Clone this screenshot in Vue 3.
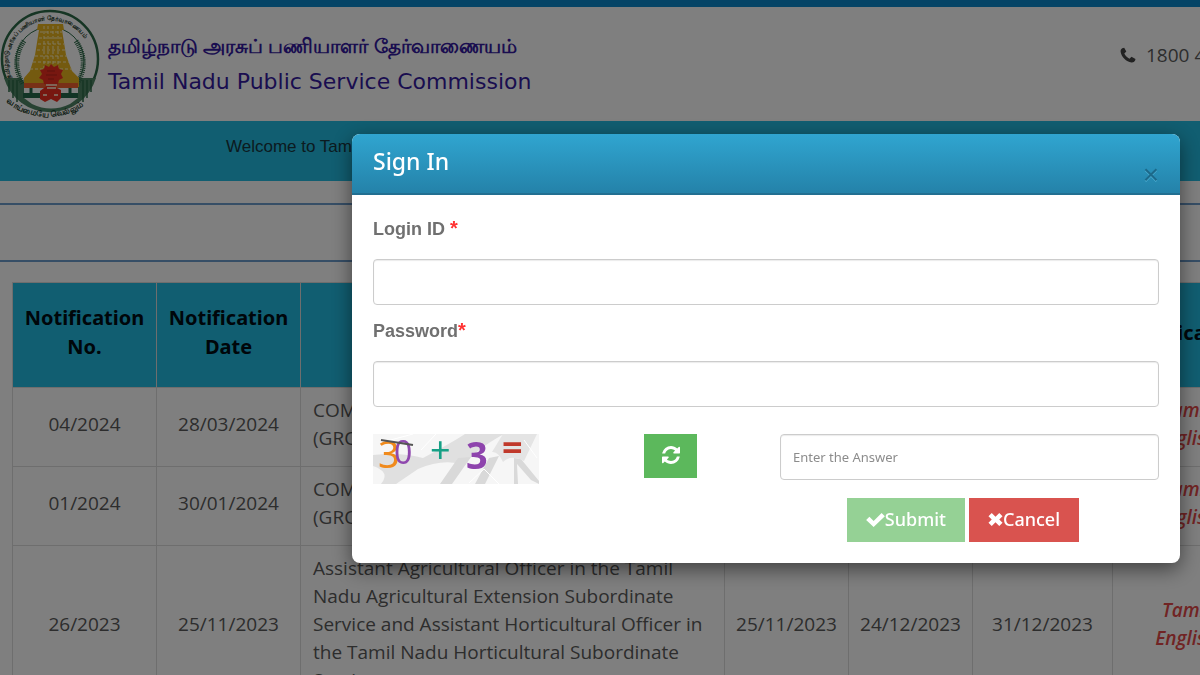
<script setup>
import { ref } from 'vue'

const loginId = ref('')
const password = ref('')
const answer = ref('')

const notifications = [
  {
    no: '04/2024',
    date: '28/03/2024',
    post: 'COMBINED CIVIL SERVICES EXAM - I\n(GROUP I SERVICES)',
    from: '28/03/2024',
    to: '27/04/2024',
    exam: '13/07/2024',
  },
  {
    no: '01/2024',
    date: '30/01/2024',
    post: 'COMBINED CIVIL SERVICES EXAM - IV\n(GROUP IV SERVICES)',
    from: '30/01/2024',
    to: '28/02/2024',
    exam: '09/06/2024',
  },
  {
    no: '26/2023',
    date: '25/11/2023',
    post: 'Assistant Agricultural Officer in the Tamil Nadu Agricultural Extension Subordinate Service and Assistant Horticultural Officer in the Tamil Nadu Horticultural Subordinate Service',
    from: '25/11/2023',
    to: '24/12/2023',
    exam: '31/12/2023',
  },
]
</script>

<template>
  <div class="page">
    <div class="strip"></div>
    <header class="masthead">
      <svg class="emblem" viewBox="0 0 100 112" aria-hidden="true">
        <defs>
          <path id="arc-top" d="M11 70A42 42 0 1 1 89 70" />
          <path id="arc-bottom" d="M6 94Q50 126 96 90" />
        </defs>
        <circle cx="50" cy="51" r="48" fill="#fff" stroke="#2c6a48" stroke-width="2.5" />
        <path d="M4 70H96A48 48 0 0 1 4 70Z" fill="#4f8464" />
        <path d="M9 72V84M13 72V90M17 72V94M83 72V94M87 72V90M91 72V84" stroke="#2c6a48" stroke-width="1.5" />
        <circle cx="50" cy="53" r="34" fill="#fff" stroke="#2c6a48" stroke-width="1" />
        <path d="M24 33Q10 54 23 76M76 33Q90 54 77 76" fill="none" stroke="#2c6a48" stroke-width="5" stroke-dasharray="1 1" />
        <path d="M38 16H63L64 22H62L66 47L72 63L79 70V79H24V70L30 63L35 47L39 22H37Z" fill="#e8b51e" />
        <path
          d="M40 24H62M39 30H63M38 36H64M37 42H65M35 48H67M33 54H69M30 61H72M44 18V60M48 18V56M53 18V56M58 18V60"
          stroke="#fff1ba"
          stroke-width="1"
          stroke-dasharray="3 2"
        />
        <path d="M24 75H78V80H24Z" fill="#f0602e" />
        <path d="M24 80H78V85H24Z" fill="#fff" />
        <path d="M23 85H78V90H23Z" fill="#24694a" />
        <path d="M31 80V85M70 80V85" stroke="#24694a" stroke-width="3" />
        <path d="M24 90H78L70 96Q51 105 32 96Z" fill="#fff" />
        <path
          d="M51 56L54 59L58 57L59 61L63 62L61 66L63 70L59 72L58 76L54 77L57 80L61 82L61 90L57 94L51 91L45 94L40 91L40 83L44 80L48 77L44 76L43 72L39 70L42 66L40 62L44 61L45 57L49 59Z"
          fill="#ef2f20"
        />
        <path d="M46 77H57M47 80H56M43 87H47M54 87H58" stroke="#ffc6ae" stroke-width="2" />
        <path d="M47 63H55M46 67H57M48 71H54" stroke="#b9221a" stroke-width="1" />
        <text class="emblem-text"><textPath href="#arc-top">தமிழ்நாடு அரசுப் பணியாளர் தேர்வாணையம்</textPath></text>
        <text class="emblem-motto"><textPath href="#arc-bottom">வாய்மையே வெல்லும்</textPath></text>
      </svg>
      <div class="names">
        <div class="name-ta" lang="ta">தமிழ்நாடு அரசுப் பணியாளர் தேர்வாணையம்</div>
        <div class="name-en">Tamil Nadu Public Service Commission</div>
      </div>
      <div class="helpline">
        <svg viewBox="0 0 16 16" aria-hidden="true">
          <path
            d="M4.2 .7 2.2 1.2C1 2 .4 3.2.6 4.8 1.2 9.8 6.5 15 11.4 15.5c1.700.2 3-.5 3.700-1.900l.4-1.700-4-2.200-2 2C7.500 11 5 8.500 4.300 6.600l2-2Z"
          />
        </svg>
        <span>1800 419 0958</span>
      </div>
    </header>
    <div class="ticker">Welcome to Tamil Nadu Public Service Commission</div>
    <div class="heading-band"></div>

    <table class="notifications">
      <colgroup>
        <col class="col-id" />
        <col class="col-id" />
        <col class="col-post" />
        <col class="col-date" />
        <col class="col-date" />
        <col class="col-exam" />
        <col class="col-link" />
      </colgroup>
      <thead>
        <tr>
          <th>Notification No.</th>
          <th>Notification Date</th>
          <th>Name of the Post</th>
          <th>From</th>
          <th>To</th>
          <th>Date of Exam</th>
          <th>Notification</th>
        </tr>
      </thead>
      <tbody>
        <tr v-for="item in notifications" :key="item.no">
          <td>{{ item.no }}</td>
          <td>{{ item.date }}</td>
          <td class="post">{{ item.post }}</td>
          <td>{{ item.from }}</td>
          <td>{{ item.to }}</td>
          <td>{{ item.exam }}</td>
          <td class="links">
            <a href="#">Tamil</a>
            <a href="#">English</a>
          </td>
        </tr>
      </tbody>
    </table>
  </div>

  <div class="backdrop">
    <div class="modal" role="dialog" aria-labelledby="modal-title">
      <div class="modal-header">
        <h4 id="modal-title">Sign In</h4>
        <button type="button" class="close" aria-label="Close">×</button>
      </div>
      <form class="modal-body" @submit.prevent>
        <label for="login-id">Login ID <span class="required">*</span></label>
        <input id="login-id" v-model="loginId" type="text" />
        <label for="password">Password<span class="required">*</span></label>
        <input id="password" v-model="password" type="password" />

        <div class="captcha-row">
          <svg class="captcha" viewBox="0 0 166 50" role="img" aria-label="Captcha">
            <rect width="166" height="50" fill="#f6f6f6" />
            <path d="M0 21Q28 18 50 24Q80 8 92 0H131Q100 17 92 31Q70 24 45 35L23 50H8Q18 38 0 32Z" fill="#e0e0e0" />
            <path d="M85 24L67 50H79L98 23ZM116 24L102 50H112L126 22ZM141 24V50H145L144 30L158 46L166 50V47L148 25Z" fill="#d9d9d9" />
            <path d="M130 0H164L151 27Q137 20 130 28Q125 17 119 18Z" fill="#e4e4e4" />
            <path d="M10 8L40 0M96 49L111 35L126 50M151 6L164 24M63 0L48 16" stroke="#fff" stroke-width="1" fill="none" />
            <text class="digit thin" x="5" y="34" fill="#f08a1c">3</text>
            <text class="digit zero" x="21" y="30" fill="#8f48ae">0</text>
            <path d="M8 6L40 11" stroke="#555" stroke-width="2" />
            <text class="digit plus" x="57" y="29" fill="#16a085">+</text>
            <text class="digit bold" x="93" y="35" fill="#8e44ad">3</text>
            <text class="digit equals" x="129" y="26" fill="#c0392b">=</text>
          </svg>
          <button type="button" class="btn refresh" aria-label="Refresh captcha">
            <svg viewBox="0 0 1536 1536" aria-hidden="true">
              <path
                d="M1511 928q0 5-1 7-64 268-268 434.500T764 1536q-146 0-282.500-55T238 1324l-129 129q-19 19-45 19t-45-19-19-45V960q0-26 19-45t45-19h448q26 0 45 19t19 45-19 45l-137 137q71 66 161 102t187 36q134 0 250-65t186-179q11-17 53-117 8-23 30-23h192q13 0 22.500 9.500t9.500 22.500zm25-800v448q0 26-19 45t-45 19h-448q-26 0-45-19t-19-45 19-45l138-138Q969 256 768 256q-134 0-250 65T332 500q-11 17-53 117-8 23-30 23H50q-13 0-22.500-9.500T18 608v-7q65-268 270-434.500T768 0q146 0 284 55.500T1297 212l130-129q19-19 45-19t45 19 19 45z"
              />
            </svg>
          </button>
          <input v-model="answer" type="text" placeholder="Enter the Answer" aria-label="Enter the Answer" />
        </div>

        <div class="actions">
          <button type="submit" class="btn submit">
            <svg viewBox="0 0 20 16" aria-hidden="true">
              <path d="M0 8.500 3.500 5 8 9.500 16.500 1 20 4.500 8 16Z" />
            </svg>Submit
          </button>
          <button type="button" class="btn cancel">
            <svg viewBox="0 0 16 16" aria-hidden="true">
              <path d="M4 1 8 5l4-4 3.500 3.500L12 8l3.500 3.500L12 15 8 11l-4 4L.5 11.500 4 8 .5 4.500Z" />
            </svg>Cancel
          </button>
        </div>
      </form>
    </div>
  </div>
</template>

<style>
body {
  margin: 0;
  overflow: hidden;
}
</style>

<style scoped>
* {
  box-sizing: border-box;
}

.page {
  height: 100vh;
  overflow: hidden;
  background: #fff;
  color: #5a5a5a;
  font-family: "Open Sans", "Noto Sans", sans-serif;
  font-size: 19px;
  line-height: 28px;
}

.strip {
  height: 7px;
  background: #0a88cc;
}

.masthead {
  display: flex;
  align-items: center;
  height: 114px;
  padding-right: 16px;
}

.emblem {
  width: 100px;
  height: 112px;
  flex: none;
}

.emblem-text {
  font-size: 6px;
  font-weight: 700;
  fill: #173526;
}

.emblem-motto {
  font-size: 8px;
  font-weight: 700;
  fill: #173526;
}

.names {
  padding-left: 8px;
  color: #351ba0;
  white-space: nowrap;
}

.name-ta {
  font-size: 20px;
  font-weight: 600;
  line-height: 36px;
}

.name-en {
  font-family: "DejaVu Sans", sans-serif;
  font-size: 22px;
  line-height: 36px;
}

.helpline {
  display: flex;
  align-items: center;
  gap: 10px;
  width: 64px;
  margin-left: auto;
  padding-bottom: 18px;
  white-space: nowrap;
}

.helpline svg {
  width: 16px;
  height: 16px;
  flex: none;
  fill: #444;
}

.ticker {
  height: 60px;
  padding: 12px 0 0 226px;
  background: #22bce2;
  color: #183640;
  font-family: "Liberation Sans", sans-serif;
  font-size: 17px;
}

.heading-band {
  height: 59px;
  margin: 22px 0 20px;
  border: solid #6c9ccc;
  border-width: 2px 0;
}

.notifications {
  width: 104%;
  margin-left: 12px;
  table-layout: fixed;
  border-collapse: collapse;
  text-align: center;
}

.col-id {
  width: 144px;
}

.col-post {
  width: 424px;
}

.col-date {
  width: 124px;
}

.col-exam {
  width: 140px;
}

.notifications th {
  height: 105px;
  padding: 0 8px 6px;
  border: 1px solid #ddd;
  background: #22bce2;
  color: #000c14;
  font-family: "Noto Sans", sans-serif;
  font-size: 20px;
  line-height: 29px;
}

.notifications td {
  padding: 8px 8px 14px;
  border: 1px solid #ddd;
}

.notifications .post {
  padding-left: 12px;
  text-align: left;
  white-space: pre-line;
}

.links a {
  display: block;
  color: #e24848;
  font-style: italic;
  font-weight: 600;
  text-decoration: none;
}

.backdrop {
  position: fixed;
  inset: 0;
  display: flex;
  align-items: flex-start;
  justify-content: flex-end;
  padding: 134px 20px 0;
  background: rgba(0, 0, 0, 0.5);
  font-family: "Noto Sans", sans-serif;
}

.modal {
  width: 828px;
  max-width: 100%;
  border-radius: 8px;
  background: #fff;
  box-shadow: 0 6px 20px rgba(0, 0, 0, 0.5);
}

.modal-header {
  display: flex;
  justify-content: space-between;
  height: 61px;
  padding: 9px 21px 0;
  border-bottom: 2px solid #226f91;
  border-radius: 8px 8px 0 0;
  background: linear-gradient(#30a5d0, #2482a9);
}

.modal-header h4 {
  margin: 0;
  color: #fff;
  font-size: 23px;
  font-weight: 500;
  line-height: 36px;
}

.close {
  align-self: flex-end;
  padding: 0;
  border: 0;
  background: none;
  color: #1c698a;
  font-family: "Liberation Sans", sans-serif;
  font-size: 28px;
  line-height: 36px;
  text-shadow: 0 1px 0 #4bacd0;
}

.modal-body {
  padding: 16px 21px 21px;
}

label {
  display: block;
  margin-bottom: 12px;
  color: #707070;
  font-family: "Liberation Sans", sans-serif;
  font-size: 18px;
  font-weight: 700;
  line-height: 36px;
}

.required {
  color: #f33;
  font-size: 20px;
  line-height: 20px;
}

input {
  display: block;
  width: 100%;
  height: 46px;
  padding: 0 12px;
  border: 1px solid #ccc;
  border-radius: 4px;
  background: #fff;
  color: #555;
  font-family: "Noto Sans", sans-serif;
  font-size: 13px;
  box-shadow: inset 0 1px 1px rgba(0, 0, 0, 0.08);
}

input::placeholder {
  color: #8c8c8c;
}

#login-id {
  margin-bottom: 8px;
}

.captcha-row {
  display: grid;
  grid-template-columns: 271fr 136fr 379fr;
  align-items: start;
  margin-top: 27px;
}

.captcha {
  width: 166px;
  height: 50px;
}

.digit {
  font-family: "Noto Sans", sans-serif;
}

.thin {
  font-size: 38px;
}

.zero {
  font-size: 32px;
}

.plus {
  font-size: 36px;
}

.bold {
  font-size: 38px;
  font-weight: 700;
}

.equals {
  font-size: 36px;
  font-weight: 700;
}

.btn {
  display: inline-flex;
  align-items: center;
  justify-content: center;
  height: 44px;
  padding: 0 19px 2px;
  border: 0;
  color: #fff;
  font-family: "Noto Sans", sans-serif;
  font-size: 18px;
  font-weight: 500;
}

.btn svg {
  fill: #fff;
}

.refresh {
  width: 53px;
  background: #5cb85c;
}

.refresh svg {
  width: 18px;
  height: 18px;
  flex: none;
}

.actions {
  display: flex;
  justify-content: flex-end;
  gap: 4px;
  margin-top: 14px;
  padding-right: 80px;
}

.submit {
  background: #95d195;
}

.submit svg {
  width: 19px;
  height: 15px;
}

.cancel {
  background: #d9534f;
}

.cancel svg {
  width: 15px;
  height: 15px;
}
</style>
